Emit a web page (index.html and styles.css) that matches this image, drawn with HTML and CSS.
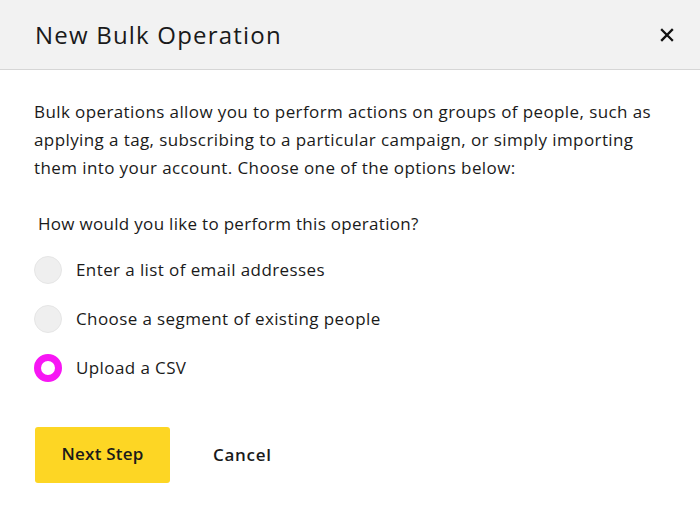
FILE: index.html
```html
<!DOCTYPE html>
<html>
<head>
<meta charset="utf-8">
<link rel="stylesheet" href="styles.css">
</head>
<body>
<div class="modal">
  <header class="modal-header">
    <h1 class="modal-title">New Bulk Operation</h1>
    <button class="close-btn" aria-label="Close">
      <svg width="14" height="14" viewBox="0 0 14 14"><path d="M2 2 L12 12 M12 2 L2 12" stroke="#111" stroke-width="2.3" stroke-linecap="square"/></svg>
    </button>
  </header>
  <div class="modal-body">
    <p class="intro">Bulk operations allow you to perform actions on groups of people, such as applying a tag, subscribing to a particular campaign, or simply importing them into your account. Choose one of the options below:</p>
    <p class="question">How would you like to perform this operation?</p>
    <div class="options">
      <label class="option"><span class="radio"></span><span>Enter a list of email addresses</span></label>
      <label class="option"><span class="radio"></span><span>Choose a segment of existing people</span></label>
      <label class="option"><span class="radio checked"></span><span>Upload a CSV</span></label>
    </div>
    <div class="actions">
      <button class="btn-primary">Next Step</button>
      <button class="btn-link">Cancel</button>
    </div>
  </div>
</div>
</body>
</html>
```
FILE: styles.css
```css
* { box-sizing: border-box; }
html, body { margin: 0; padding: 0; background: #fff; }
body { font-family: "Open Sans", "Noto Sans", sans-serif; color: #1a1a1a; }
.modal { width: 700px; height: 510px; background: #fff; }
.modal-header {
  height: 70px;
  background: #f2f2f2;
  border-bottom: 1px solid #d6d6d6;
  display: flex;
  align-items: center;
  justify-content: space-between;
  padding: 0 22px 0 35px;
}
.modal-title { margin: 0; font-size: 24px; font-weight: 400; letter-spacing: 1.2px; color: #1a1a1a; }
.close-btn { background: none; border: 0; padding: 4px; display: flex; cursor: pointer; }
.modal-body { padding: 28px 34px 0 34px; }
.intro { margin: 0; font-size: 17px; line-height: 28px; letter-spacing: 0.4px; }
.question { margin: 28px 0 0 4px; font-size: 17px; line-height: 28px; letter-spacing: 0.3px; }
.options { display: flex; flex-direction: column; gap: 21px; margin-top: 18px; }
.option { display: flex; align-items: center; gap: 14px; font-size: 17px; line-height: 28px; letter-spacing: 0.4px; }
.radio { width: 28px; height: 28px; border-radius: 50%; background: #efefef; border: 1px solid #e6e6e6; flex: none; }
.radio.checked { background: #fff; border: 7px solid #f716f4; }
.actions { display: flex; align-items: center; gap: 43px; margin-top: 45px; margin-left: 1px; }
.btn-primary {
  width: 135px; height: 56px;
  background: #fdd624; border: 0; border-radius: 3px;
  font-family: inherit; font-size: 17px; font-weight: 600; color: #1a1a1a; letter-spacing: 0.2px;
  padding: 0 0 3px;
}
.btn-link { background: none; border: 0; padding: 0 0 2px; font-family: inherit; font-size: 17px; font-weight: 600; color: #1a1a1a; letter-spacing: 0.7px; }
```
